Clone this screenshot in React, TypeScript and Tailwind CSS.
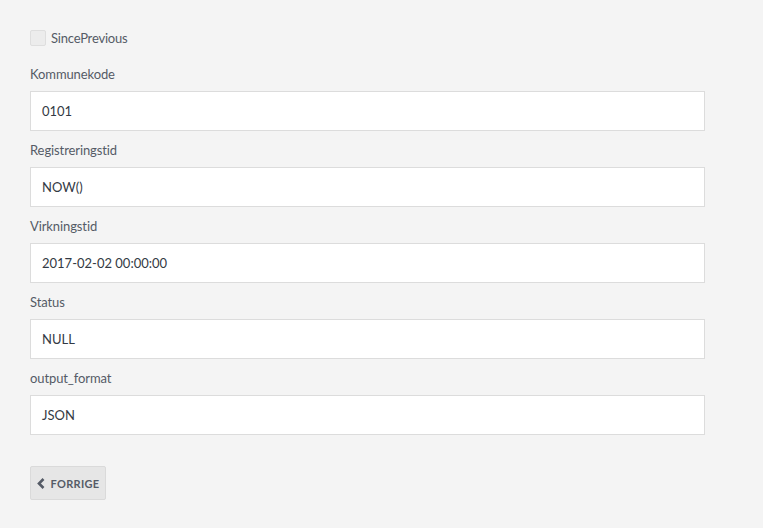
const fields = [
  { label: "Kommunekode", value: "0101" },
  { label: "Registreringstid", value: "NOW()" },
  { label: "Virkningstid", value: "2017-02-02 00:00:00" },
  { label: "Status", value: "NULL" },
  { label: "output_format", value: "JSON" },
];

export default function App() {
  return (
    <div
      className="min-h-screen bg-[#f4f4f4] px-[30px] pt-[30px] text-[13px]"
      style={{ fontFamily: "Lato, 'Open Sans', sans-serif" }}
    >
      <div className="w-[675px]">
        <div className="flex h-4 items-center gap-[5px]">
          <span className="h-4 w-4 rounded-[2px] border border-[#dedede] bg-[#ececec]" />
          <span className="leading-4 tracking-[-0.2px] text-[#555b66]">SincePrevious</span>
        </div>
        <div className="mt-[19px]">
          {fields.map((f) => (
            <div key={f.label} className="mb-[10px]">
              <label className="block leading-[18px] tracking-[-0.1px] text-[#555b66]">
                {f.label}
              </label>
              <div className="mt-2 flex h-10 items-center border border-[#dcdcdc] bg-white px-[11px] pt-[2px] text-[#333a44]">
                {f.value}
              </div>
            </div>
          ))}
        </div>
        <button className="mt-[31px] flex h-[34px] w-[76px] items-center justify-center gap-[6px] rounded-[2px] border border-[#dadada] bg-[#e6e6e6] pt-[2px] text-[11px] font-bold tracking-[0.3px] text-[#555b66]">
          <svg width="8" height="11" viewBox="0 0 8 11" className="-mt-[2px]">
            <path d="M6.5 1 L2 5.5 L6.5 10" fill="none" stroke="#555b66" strokeWidth="2.6" />
          </svg>
          FORRIGE
        </button>
      </div>
    </div>
  );
}
